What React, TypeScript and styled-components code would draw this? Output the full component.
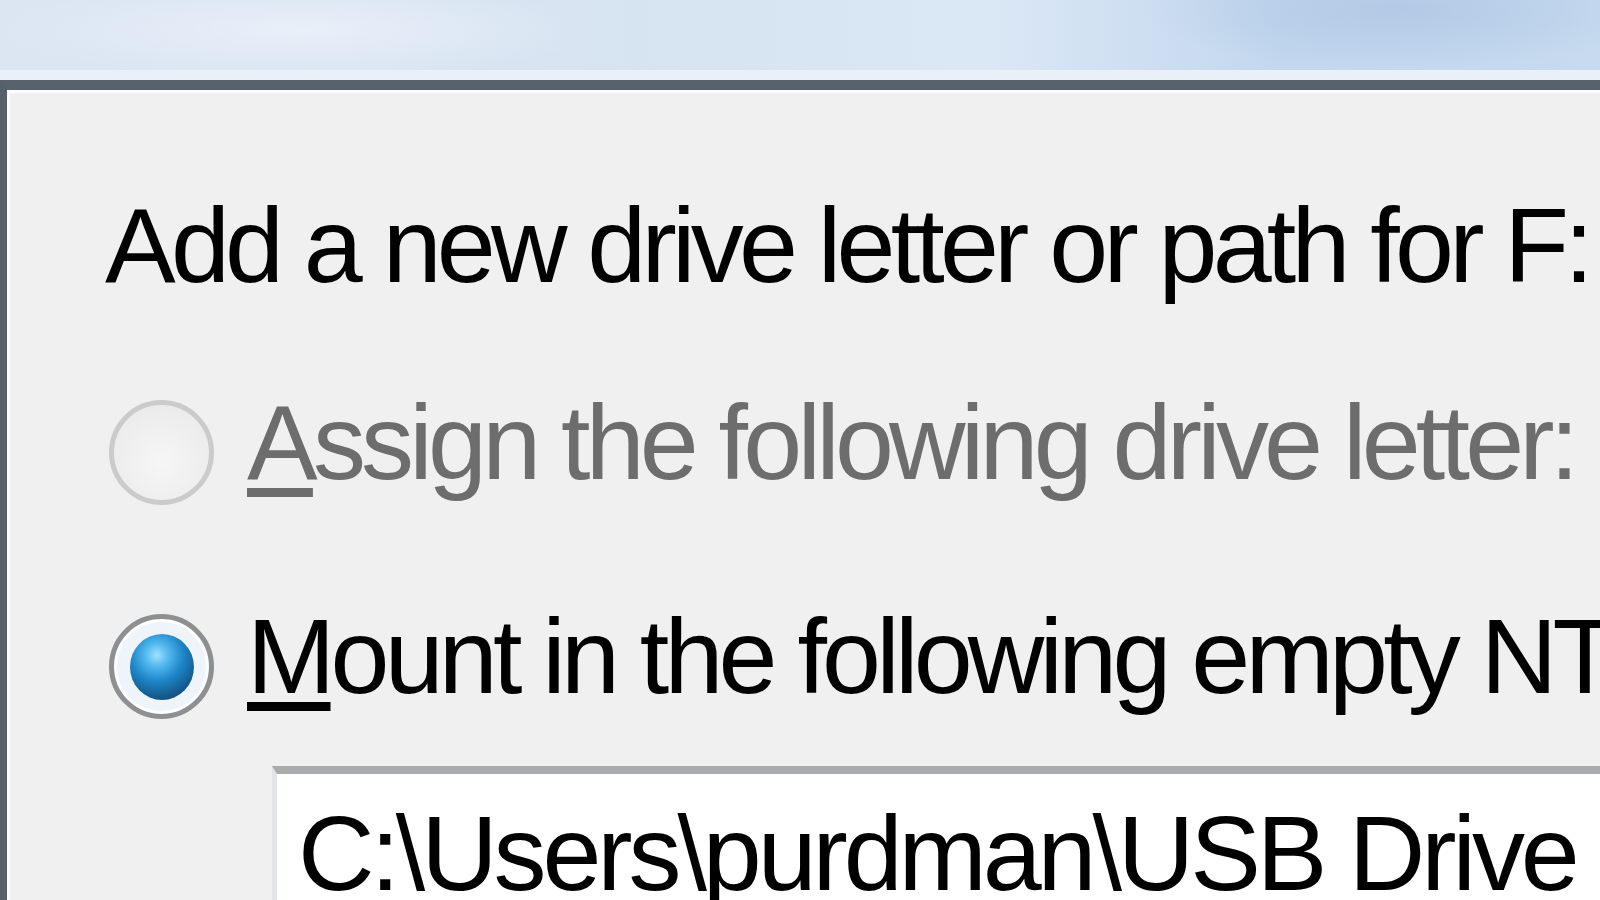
import React from "react";
import styled, { createGlobalStyle } from "styled-components";

const Global = createGlobalStyle`
  html, body {
    margin: 0;
    padding: 0;
    background: #f0f0f0;
    overflow: hidden;
  }
  #root {
    width: 1600px;
    height: 900px;
  }
`;

const Page = styled.div`
  width: 1600px;
  height: 900px;
  display: flex;
  flex-direction: column;
  overflow: hidden;
  font-family: "Liberation Sans", Arial, sans-serif;
`;

const Backdrop = styled.div`
  flex: 0 0 70px;
  background:
    radial-gradient(ellipse 260px 60px at 1400px 10px, rgba(170, 196, 226, 0.7), rgba(170, 196, 226, 0) 100%),
    radial-gradient(ellipse 300px 50px at 300px 30px, rgba(236, 242, 250, 0.8), rgba(236, 242, 250, 0) 100%),
    linear-gradient(90deg, #dbe6f2 0%, #d6e3f1 40%, #dae7f5 62%, #c3d7ee 80%, #c7daef 100%);
  border-bottom: 10px solid #e9f0f8;
`;

const Window = styled.div`
  flex: 1;
  display: flex;
  flex-direction: column;
  background: #f0f0f0;
  border-top: 10px solid #58626d;
  border-left: 7px solid #56606b;
  box-shadow: inset 3px 3px 0 #fbfcfe;
  min-height: 0;
`;

const Content = styled.div`
  display: flex;
  flex-direction: column;
  padding: 100px 0 0 98px;
`;

const textStyle = `
  font-size: 106px;
  line-height: 110px;
  letter-spacing: -4.8px;
  white-space: nowrap;
`;

const Title = styled.div`
  ${textStyle}
  color: #000;
`;

const Options = styled.div`
  display: flex;
  flex-direction: column;
  gap: 96px;
  margin-top: 87px;
  margin-left: 4px;
`;

const RadioRow = styled.label`
  display: flex;
  align-items: flex-start;
  gap: 33px;
`;

const RadioCircle = styled.span<{ $checked?: boolean; $disabled?: boolean }>`
  flex: 0 0 auto;
  width: 105px;
  height: 105px;
  margin-top: 13px;
  border-radius: 50%;
  box-sizing: border-box;
  display: flex;
  align-items: center;
  justify-content: center;
  border: ${(p) => (p.$checked ? "5px solid #8d8f91" : "5px solid #cbcbcb")};
  background: ${(p) =>
    p.$checked
      ? "#eef4fa"
      : "radial-gradient(circle at 50% 60%, #f6f6f6 0%, #ececec 70%, #e6e6e6 100%)"};
  box-shadow: ${(p) => (p.$checked ? "inset 0 0 0 3px #fbfdff" : "none")};
`;

const RadioDot = styled.span`
  width: 64px;
  height: 66px;
  border-radius: 50%;
  background: radial-gradient(
    circle at 42% 32%,
    #9fe2ff 0%,
    #52b8ef 20%,
    #1e86c8 45%,
    #145d90 70%,
    #0e3a5c 100%
  );
`;

const RadioText = styled.span<{ $disabled?: boolean }>`
  ${textStyle}
  color: ${(p) => (p.$disabled ? "#6d6d6d" : "#000")};
`;

const Mnemonic = styled.span`
  text-decoration: underline;
  text-decoration-thickness: 9px;
  text-underline-offset: 9px;
  text-decoration-skip-ink: none;
`;

const PathField = styled.div`
  ${textStyle}
  letter-spacing: -4.1px;
  margin-top: 47px;
  margin-left: 167px;
  width: 1500px;
  height: 200px;
  box-sizing: border-box;
  background: #ffffff;
  border-top: 8px solid #a9abaf;
  border-left: 5px solid #e3e4e9;
  padding: 24px 0 0 21px;
  color: #000;
`;

export default function App() {
  return (
    <Page>
      <Global />
      <Backdrop />
      <Window>
        <Content>
          <Title>Add a new drive letter or path for F:</Title>
          <Options>
            <RadioRow>
              <RadioCircle $disabled />
              <RadioText $disabled>
                <Mnemonic>A</Mnemonic>ssign the following drive letter:
              </RadioText>
            </RadioRow>
            <RadioRow>
              <RadioCircle $checked>
                <RadioDot />
              </RadioCircle>
              <RadioText>
                <Mnemonic>M</Mnemonic>ount in the following empty NTFS folder:
              </RadioText>
            </RadioRow>
          </Options>
          <PathField>C:\Users\purdman\USB Drive</PathField>
        </Content>
      </Window>
    </Page>
  );
}
